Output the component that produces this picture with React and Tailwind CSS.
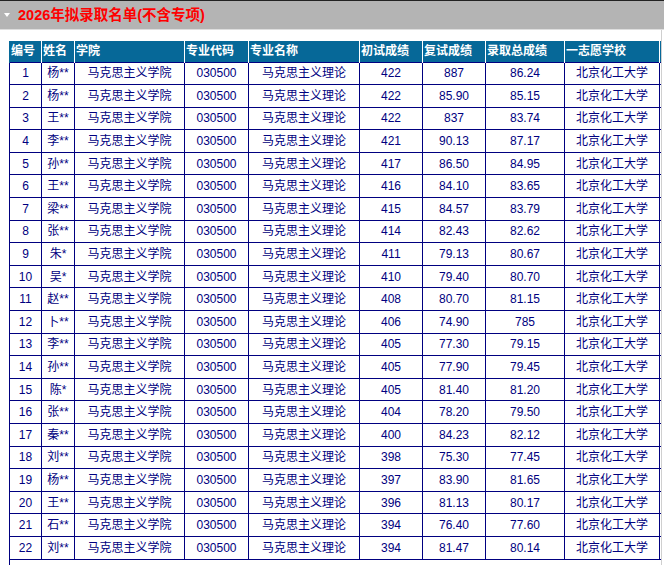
const rows = [
  ['1', '杨**', '422', '887', '86.24'],
  ['2', '杨**', '422', '85.90', '85.15'],
  ['3', '王**', '422', '837', '83.74'],
  ['4', '李**', '421', '90.13', '87.17'],
  ['5', '孙**', '417', '86.50', '84.95'],
  ['6', '王**', '416', '84.10', '83.65'],
  ['7', '梁**', '415', '84.57', '83.79'],
  ['8', '张**', '414', '82.43', '82.62'],
  ['9', '朱*', '411', '79.13', '80.67'],
  ['10', '吴*', '410', '79.40', '80.70'],
  ['11', '赵**', '408', '80.70', '81.15'],
  ['12', '卜**', '406', '74.90', '785'],
  ['13', '李**', '405', '77.30', '79.15'],
  ['14', '孙**', '405', '77.90', '79.45'],
  ['15', '陈*', '405', '81.40', '81.20'],
  ['16', '张**', '404', '78.20', '79.50'],
  ['17', '秦**', '400', '84.23', '82.12'],
  ['18', '刘**', '398', '75.30', '77.45'],
  ['19', '杨**', '397', '83.90', '81.65'],
  ['20', '王**', '396', '81.13', '80.17'],
  ['21', '石**', '394', '76.40', '77.60'],
  ['22', '刘**', '394', '81.47', '80.14'],
];

const heads = ['编号', '姓名', '学院', '专业代码', '专业名称', '初试成绩', '复试成绩', '录取总成绩', '一志愿学校', ''];
const widths = [32, 33, 110, 64, 111, 63, 63, 79, 95, 80];

export default function App() {
  return (
    <div className="w-[664px] h-[565px] overflow-hidden bg-white font-['Liberation_Sans','Noto_Sans_CJK_SC',sans-serif]">
      <div className="h-[30px] border-t border-t-[#222] border-b border-b-[#dedede] bg-[#b4b4b4] flex items-center">
        <span className="ml-[4px] mr-[8px] w-0 h-0 border-l-[3.5px] border-r-[3.5px] border-t-[4px] border-l-transparent border-r-transparent border-t-white" />
        <h1 className="text-[14.5px] font-bold text-[#ff0000] leading-none">2026年拟录取名单(不含专项)</h1>
      </div>
      <div className="w-[662px] h-[535px] overflow-hidden border-r border-r-[#cfcfcf] pl-[9px] pt-[11px]">
        <table className="table-fixed border-collapse w-[730px] text-[12px] text-[#000080]">
          <colgroup>
            {widths.map((w, i) => (
              <col key={i} style={{ width: w }} />
            ))}
          </colgroup>
          <thead>
            <tr className="h-[21px] bg-[#066898]">
              {heads.map((h, i) => (
                <th
                  key={i}
                  className="border-l border-r border-white first:border-l-[#066898] pl-[1px] text-left font-bold text-white whitespace-nowrap overflow-hidden"
                >
                  {h}
                </th>
              ))}
            </tr>
          </thead>
          <tbody>
            {rows.map((r) => (
              <tr key={r[0]} className="h-[22.6px]">
                <td className="border border-[#000080] text-center p-0">{r[0]}</td>
                <td className="border border-[#000080] text-center p-0">{r[1]}</td>
                <td className="border border-[#000080] text-center p-0">马克思主义学院</td>
                <td className="border border-[#000080] text-center p-0">030500</td>
                <td className="border border-[#000080] text-center p-0">马克思主义理论</td>
                <td className="border border-[#000080] text-center p-0">{r[2]}</td>
                <td className="border border-[#000080] text-center p-0">{r[3]}</td>
                <td className="border border-[#000080] text-center p-0">{r[4]}</td>
                <td className="border border-[#000080] text-center p-0">北京化工大学</td>
                <td className="border border-[#000080] text-center p-0"></td>
              </tr>
            ))}
            <tr className="h-[22.6px]">
              <td colSpan={10} className="border-l border-[#000080]"></td>
            </tr>
          </tbody>
        </table>
      </div>
    </div>
  );
}
